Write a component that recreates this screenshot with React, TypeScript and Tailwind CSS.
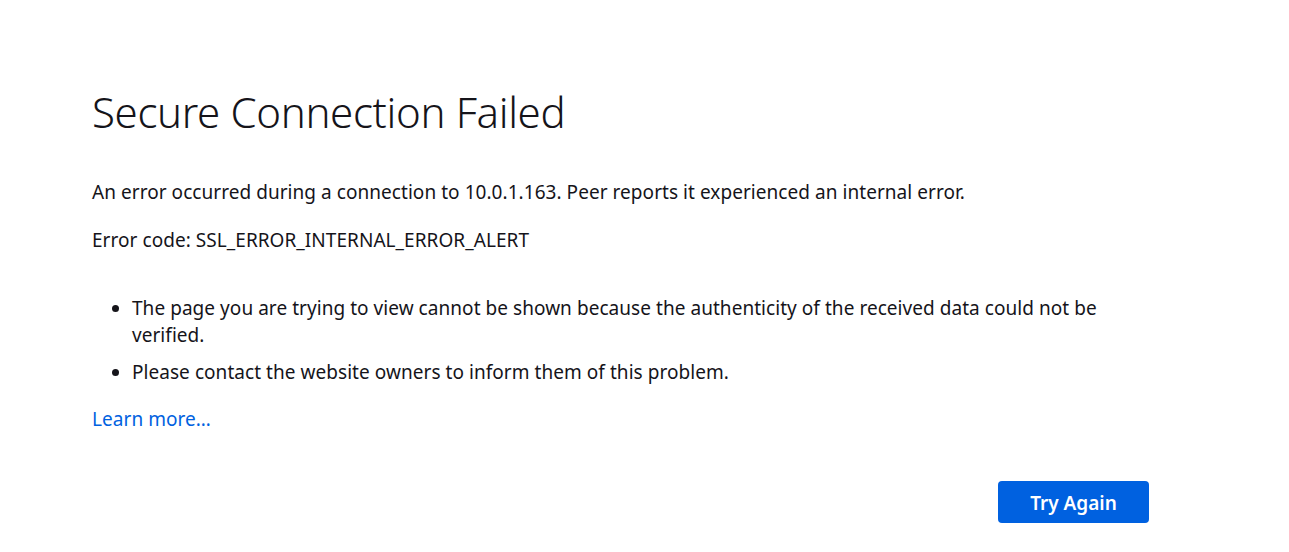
import React from "react";

export default function App() {
  return (
    <div className="min-h-[552px] w-full bg-white text-[#15141a]" style={{ fontFamily: '"Noto Sans", "Open Sans", sans-serif' }}>
      <div className="pl-[92px] pt-[84px] w-[1149px]">
        <h1 className="text-[42px] leading-[56px] font-light tracking-[-0.35px]">Secure Connection Failed</h1>
        <div className="text-[19px] leading-[27px] tracking-[0.05px]">
          <p className="mt-[39px]">An error occurred during a connection to 10.0.1.163. Peer reports it experienced an internal error.</p>
          <p className="mt-[21px]">Error code: SSL_ERROR_INTERNAL_ERROR_ALERT</p>
          <ul className="mt-[41px] list-disc pl-[40px]">
            <li>The page you are trying to view cannot be shown because the authenticity of the received data could not be verified.</li>
            <li className="mt-[10px]">Please contact the website owners to inform them of this problem.</li>
          </ul>
          <a className="block mt-[20px] text-[#0061e0]" href="#">Learn more…</a>
        </div>
        <div className="flex justify-end mt-[48px]">
          <button className="h-[42px] w-[151px] rounded-[4px] bg-[#0061e0] pt-[3px] text-white text-[19px] font-semibold">Try Again</button>
        </div>
      </div>
    </div>
  );
}
